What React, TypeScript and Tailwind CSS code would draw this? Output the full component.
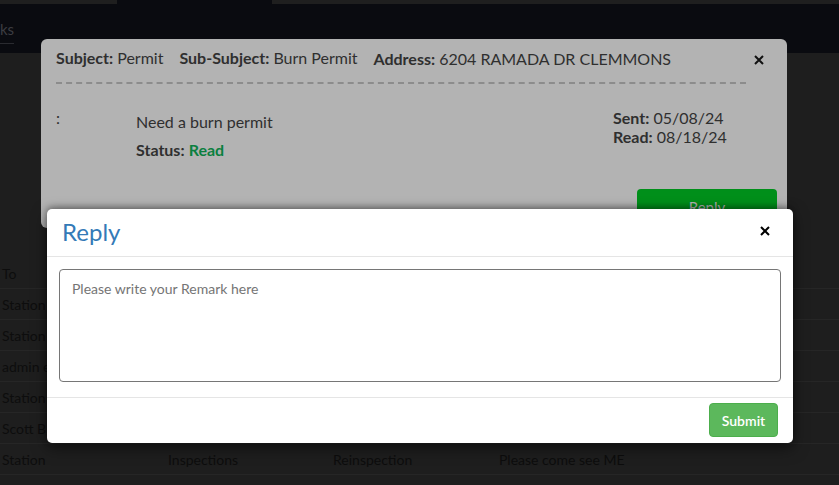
import React from "react";

const rows = [
  ["Station", "", "", ""],
  ["Station", "", "", ""],
  ["admin e", "", "", ""],
  ["Station", "", "", ""],
  ["Scott B", "", "", ""],
  ["Station", "Inspections", "Reinspection", "Please come see ME"],
];

const App = () => {
  return (
    <div className="relative h-[485px] w-full overflow-hidden bg-[#1e1e1e] font-['Lato',sans-serif]">
      {/* top bar */}
      <div className="flex h-[4px]">
        <div className="w-[117px] bg-[#1f1f1f]" />
        <div className="w-[155px] bg-[#0a0b10]" />
        <div className="flex-1 bg-[#1f1f1f]" />
      </div>
      <div className="h-[49px] bg-[#0a0b10]">
        <div className="inline-block border-b border-[#2a2b30] pt-[15px] pb-[4px] text-[15px] leading-[20px] text-[#3c3d42]">
          ks
        </div>
      </div>

      {/* table behind */}
      <div className="mt-[205px] text-[14px] text-[#0d0d0d]">
        <div className="flex h-[31px] items-center border-b border-[#262626] px-[2px]">
          <span>To</span>
        </div>
        {rows.map((r, i) => (
          <div
            key={i}
            className="grid h-[31px] grid-cols-[166px_165px_166px_1fr] items-center border-b border-[#262626] px-[2px]"
          >
            {r.map((c, j) => (
              <span key={j}>{c}</span>
            ))}
          </div>
        ))}
      </div>

      {/* first message modal (behind backdrop) */}
      <div className="absolute left-[41px] top-[39px] h-[189px] w-[746px] rounded-[6px] bg-[#b3b3b3] px-[15px] text-[16px] text-[#2f2f2f]">
        <div className="flex items-start">
          <div className="w-[690px]">
            <div className="flex gap-[16px] pt-[9px] pb-[13px] leading-[20px]">
              <span>
                <b className="font-bold">Subject:</b> Permit
              </span>
              <span>
                <b className="font-bold">Sub-Subject:</b> Burn Permit
              </span>
              <span className="pt-[1px]">
                <b className="font-bold">Address:</b> 6204 RAMADA DR CLEMMONS
              </span>
            </div>
            <div className="border-t-2 border-dashed border-[#8c8c8c]" />
          </div>
          <svg
            className="ml-[8px] mt-[16px]"
            width="10"
            height="10"
            viewBox="0 0 10 10"
          >
            <path d="M1 1L9 9M9 1L1 9" stroke="#111" strokeWidth="2" />
          </svg>
        </div>
        <div className="flex pt-[24px]">
          <div className="w-[80px] leading-[20px]">:</div>
          <div className="w-[477px] pt-[4px]">
            <div className="leading-[20px]">Need a burn permit</div>
            <div className="mt-[8px] leading-[20px]">
              <b className="font-bold">Status:</b>{" "}
              <b className="font-bold text-[#0b7f3f]">Read</b>
            </div>
          </div>
          <div className="leading-[19px]">
            <div>
              <b className="font-bold">Sent:</b> 05/08/24
            </div>
            <div>
              <b className="font-bold">Read:</b> 08/18/24
            </div>
          </div>
        </div>
        <div className="mr-[-5px] mt-[29px] flex justify-end">
          <button className="h-[34px] w-[140px] rounded-[4px] bg-[#008f1a] pt-[2px] text-[15px] text-[#b3b3b3]">
            Reply
          </button>
        </div>
      </div>

      {/* reply modal */}
      <div className="absolute left-[47px] top-[209px] w-[746px] rounded-[5px] bg-white shadow-[0_-2px_6px_rgba(0,0,0,0.35),0_5px_15px_rgba(0,0,0,0.5)]">
        <div className="flex h-[48px] items-center justify-between border-b border-[#e5e5e5] pl-[15px] pr-[23px]">
          <h4 className="mt-[-1px] text-[24px] leading-none text-[#337ab7]">Reply</h4>
          <svg width="10" height="10" viewBox="0 0 10 10" className="mt-[-3px]">
            <path d="M1 1L9 9M9 1L1 9" stroke="#000" strokeWidth="2" />
          </svg>
        </div>
        <div className="px-[12px] pt-[12px] pb-[15px]">
          <textarea
            className="block h-[113px] w-full resize-none rounded-[4px] border border-[#767676] px-[12px] py-[8px] text-[14px] text-[#333] outline-none placeholder:text-[#757575]"
            placeholder="Please write your Remark here"
          />
        </div>
        <div className="flex justify-end border-t border-[#e5e5e5] pt-[5px] pb-[6px] pr-[15px]">
          <button className="h-[34px] w-[69px] rounded-[4px] border border-[#4cae4c] bg-[#5cb85c] text-[14px] font-semibold text-white">
            Submit
          </button>
        </div>
      </div>
    </div>
  );
};

export default App;
